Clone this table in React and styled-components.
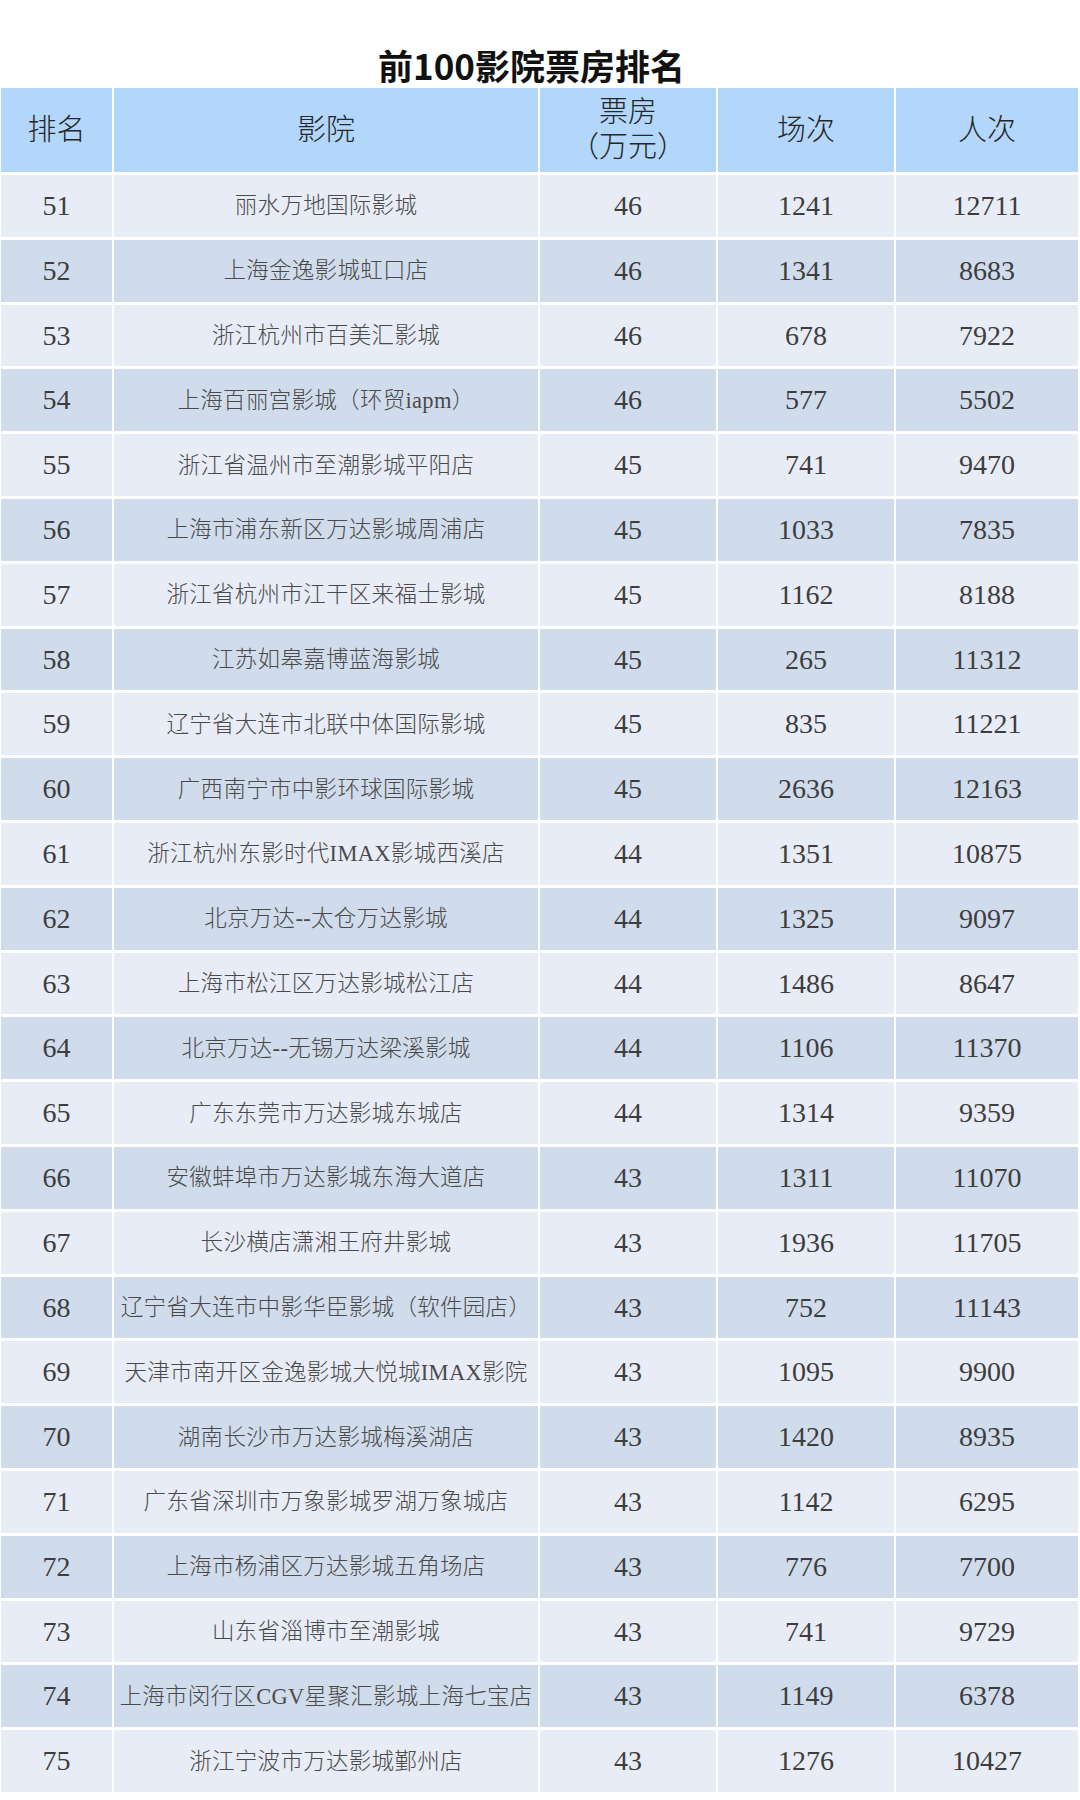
import React from 'react'
import styled, { createGlobalStyle } from 'styled-components'

const GlobalStyle = createGlobalStyle`
	html, body {
		margin: 0;
		padding: 0;
		background: #ffffff;
	}
	body {
		width: 1080px;
		font-family: "Liberation Serif", "Noto Sans CJK SC", serif;
	}
`

const Page = styled.div`
	width: 1080px;
	padding: 0 2px 8px 1px;
	box-sizing: border-box;
`

const Title = styled.h1`
	margin: 0;
	height: 88px;
	padding-top: 40px;
	padding-right: 16px;
	box-sizing: border-box;
	display: flex;
	align-items: center;
	justify-content: center;
	font-family: "Noto Sans CJK SC", "Noto Sans", sans-serif;
	font-weight: 700;
	font-size: 35px;
	line-height: 1;
	color: #111;
`

const Table = styled.div`
	display: flex;
	flex-direction: column;
	gap: 3px;
`

const Row = styled.div`
	display: grid;
	grid-template-columns: 111px 424px 176px 176px 1fr;
	column-gap: 2px;
	height: ${props => props.$head ? '84px' : '61.8px'};
`

const tones = {
	head: '#b2d7fa',
	light: '#e8ecf6',
	dark: '#d0dcec',
}

const Cell = styled.div`
	display: flex;
	align-items: center;
	justify-content: center;
	text-align: center;
	background: ${props => tones[props.$tone]};
	color: ${props => props.$tone === 'head' ? '#262626' : '#3d3d3d'};
	font-size: ${props => props.$tone === 'head' ? '29px' : '28px'};
	font-weight: 300;
	line-height: 1.2;
	white-space: nowrap;
	overflow: hidden;
`

const Name = styled.span`
	font-size: 22.5px;
	letter-spacing: 0.3px;
	color: #4a4a4a;
	font-weight: 300;
`

const rows = [
	[51, '丽水万地国际影城', 46, 1241, 12711],
	[52, '上海金逸影城虹口店', 46, 1341, 8683],
	[53, '浙江杭州市百美汇影城', 46, 678, 7922],
	[54, '上海百丽宫影城（环贸iapm）', 46, 577, 5502],
	[55, '浙江省温州市至潮影城平阳店', 45, 741, 9470],
	[56, '上海市浦东新区万达影城周浦店', 45, 1033, 7835],
	[57, '浙江省杭州市江干区来福士影城', 45, 1162, 8188],
	[58, '江苏如皋嘉博蓝海影城', 45, 265, 11312],
	[59, '辽宁省大连市北联中体国际影城', 45, 835, 11221],
	[60, '广西南宁市中影环球国际影城', 45, 2636, 12163],
	[61, '浙江杭州东影时代IMAX影城西溪店', 44, 1351, 10875],
	[62, '北京万达--太仓万达影城', 44, 1325, 9097],
	[63, '上海市松江区万达影城松江店', 44, 1486, 8647],
	[64, '北京万达--无锡万达梁溪影城', 44, 1106, 11370],
	[65, '广东东莞市万达影城东城店', 44, 1314, 9359],
	[66, '安徽蚌埠市万达影城东海大道店', 43, 1311, 11070],
	[67, '长沙横店潇湘王府井影城', 43, 1936, 11705],
	[68, '辽宁省大连市中影华臣影城（软件园店）', 43, 752, 11143],
	[69, '天津市南开区金逸影城大悦城IMAX影院', 43, 1095, 9900],
	[70, '湖南长沙市万达影城梅溪湖店', 43, 1420, 8935],
	[71, '广东省深圳市万象影城罗湖万象城店', 43, 1142, 6295],
	[72, '上海市杨浦区万达影城五角场店', 43, 776, 7700],
	[73, '山东省淄博市至潮影城', 43, 741, 9729],
	[74, '上海市闵行区CGV星聚汇影城上海七宝店', 43, 1149, 6378],
	[75, '浙江宁波市万达影城鄞州店', 43, 1276, 10427],
]

const App = () => {
	return (
		<Page>
			<GlobalStyle />
			<Title>前100影院票房排名</Title>
			<Table>
				<Row $head>
					<Cell $tone="head">排名</Cell>
					<Cell $tone="head">影院</Cell>
					<Cell $tone="head">票房<br />（万元）</Cell>
					<Cell $tone="head">场次</Cell>
					<Cell $tone="head">人次</Cell>
				</Row>
				{rows.map(([rank, name, box, shows, people], i) => {
					const tone = i % 2 === 0 ? 'light' : 'dark'
					return (
						<Row key={rank}>
							<Cell $tone={tone}>{rank}</Cell>
							<Cell $tone={tone}><Name>{name}</Name></Cell>
							<Cell $tone={tone}>{box}</Cell>
							<Cell $tone={tone}>{shows}</Cell>
							<Cell $tone={tone}>{people}</Cell>
						</Row>
					)
				})}
			</Table>
		</Page>
	)
}

export default App
